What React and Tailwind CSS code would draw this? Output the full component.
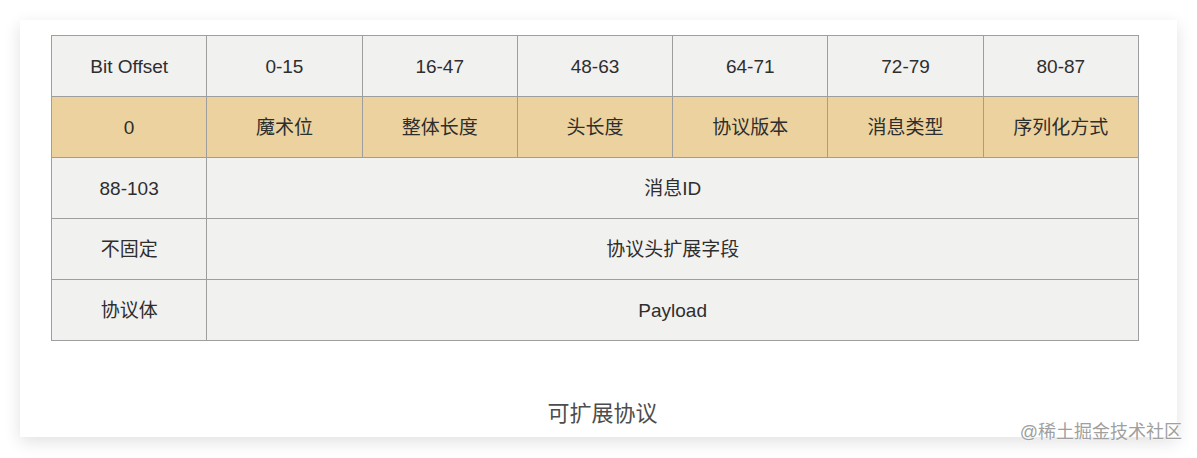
import React from "react";

const font = { fontFamily: '"Liberation Sans", "Noto Sans CJK SC", sans-serif' };

const header = ["Bit Offset", "0-15", "16-47", "48-63", "64-71", "72-79", "80-87"];
const orange = ["0", "魔术位", "整体长度", "头长度", "协议版本", "消息类型", "序列化方式"];
const spanRows = [
  ["88-103", "消息ID"],
  ["不固定", "协议头扩展字段"],
  ["协议体", "Payload"],
];

function Cell({ children, className = "" }) {
  return (
    <div
      className={`h-[61px] pt-[3px] flex items-center justify-center border-r border-b border-[#9e9e9e] text-[19px] text-[#2e2e2e] ${className}`}
    >
      {children}
    </div>
  );
}

export default function App() {
  return (
    <div className="w-[1197px] h-[458px] bg-white pt-[20px] pl-[20px]" style={font}>
      <div className="relative w-[1157px] h-[417px] bg-white shadow-[0_5px_16px_rgba(0,0,0,0.12)] pt-[15px] pl-[31px]">
        <div className="grid grid-cols-7 w-[1088px] border-t border-l border-[#9e9e9e]">
          {header.map((t) => (
            <Cell key={t} className="bg-[#f1f1f0]">{t}</Cell>
          ))}
          {orange.map((t) => (
            <Cell key={t} className="bg-[#ecd29e]">{t}</Cell>
          ))}
          {spanRows.map(([a, b]) => (
            <React.Fragment key={a}>
              <Cell className="bg-[#f1f1f0]">{a}</Cell>
              <Cell className="col-span-6 bg-[#f1f1f0]">{b}</Cell>
            </React.Fragment>
          ))}
        </div>
        <div className="mt-[56px] ml-[-31px] pl-[8px] w-[1157px] text-center text-[22px] text-[#4d4d4d]">可扩展协议</div>
        <div className="absolute right-[-5px] bottom-[-9px] text-[18px] text-[#a0a0a0] [text-shadow:0_0_2px_#ffffff,0_0_1px_#ffffff]">
          @稀土掘金技术社区
        </div>
      </div>
    </div>
  );
}
